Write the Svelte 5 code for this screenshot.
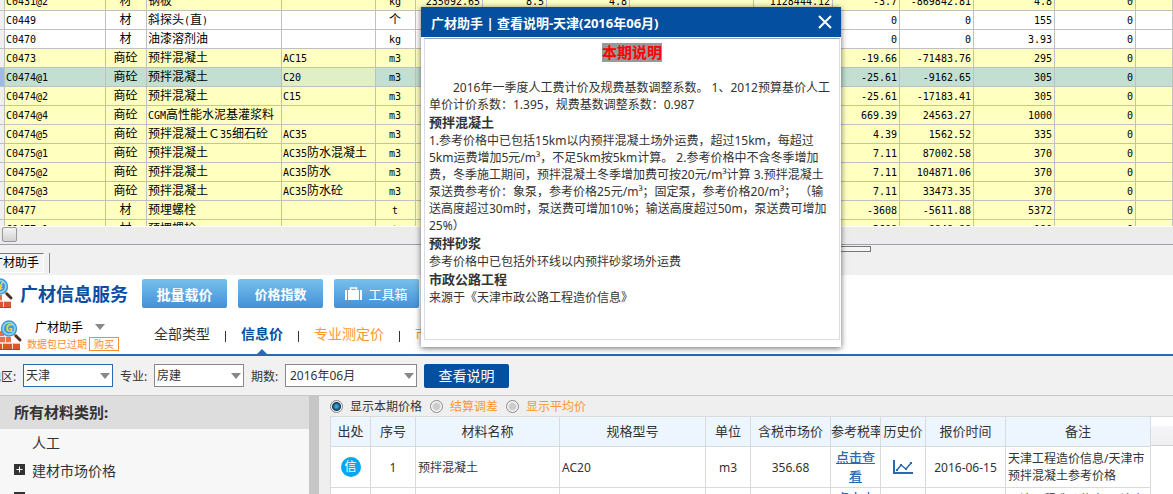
<script>
    let region = '天津';
    let major = '房建';
    let period = '2016年06月';
    let priceMode = 'current';
    let showNotice = true;

    const cols = [5, 101, 41, 135, 94, 40, 67, 64, 83, 124, 79, 67, 74, 81, 81];

    const rows = [
        ['C0431@2', '材', '钢板', '', 'kg', '235092.65', '8.5', '4.8', '', '1128444.12', '-3.7', '-869842.81', '4.8', '0'],
        ['C0449', '材', '斜探头(直)', '', '个', '', '', '', '', '', '0', '0', '155', '0'],
        ['C0470', '材', '油漆溶剂油', '', 'kg', '', '', '', '', '', '0', '0', '3.93', '0'],
        ['C0473', '商砼', '预拌混凝土', 'AC15', 'm3', '', '', '', '', '', '-19.66', '-71483.76', '295', '0'],
        ['C0474@1', '商砼', '预拌混凝土', 'C20', 'm3', '', '', '', '', '', '-25.61', '-9162.65', '305', '0'],
        ['C0474@2', '商砼', '预拌混凝土', 'C15', 'm3', '', '', '', '', '', '-25.61', '-17183.41', '305', '0'],
        ['C0474@4', '商砼', 'CGM高性能水泥基灌浆料', '', 'm3', '', '', '', '', '', '669.39', '24563.27', '1000', '0'],
        ['C0474@5', '商砼', '预拌混凝土Ｃ35细石砼', 'AC35', 'm3', '', '', '', '', '', '4.39', '1562.52', '335', '0'],
        ['C0475@1', '商砼', '预拌混凝土', 'AC35防水混凝土', 'm3', '', '', '', '', '', '7.11', '87002.58', '370', '0'],
        ['C0475@2', '商砼', '预拌混凝土', 'AC35防水', 'm3', '', '', '', '', '', '7.11', '104871.06', '370', '0'],
        ['C0475@3', '商砼', '预拌混凝土', 'AC35防水砼', 'm3', '', '', '', '', '', '7.11', '33473.35', '370', '0'],
        ['C0477', '材', '预埋螺栓', '', 't', '', '', '', '', '', '-3608', '-5611.88', '5372', '0'],
        ['C0477@1', '材', '预埋螺栓', '', 't', '', '', '', '', '', '-3608', '-8848.88', '180', '0'],
    ];
    let selected = 4;

    // latin runs and chinese runs get their own font size
    const runs = (text) => text.match(/[\x20-\x7e]+|[^\x20-\x7e]+/g) || [];
    const isLatin = (text) => /^[\x20-\x7e]/.test(text);

    const priceCols = [40, 45, 144, 146, 45, 80, 50, 45, 80, 145];
    const priceHeads = ['出处', '序号', '材料名称', '规格型号', '单位', '含税市场价', '参考税率', '历史价', '报价时间', '备注'];
</script>

{#snippet mascot(sign)}
    <svg class="mascot" width="24" height="32" viewBox="0 0 24 32" aria-hidden="true">
        <path d="M0 11h5v5H0zM0 17h12v5.500H0z" fill="#e8704a" />
        <path d="M0 23.500h21v6H0z" fill="#dc5430" />
        <path d="M0 16.500h9M0 23h21M6.500 17v6M3.500 23v7M13.500 23v7" stroke="#f9e0d4" fill="none" />
        <path d="M0 29.500h21" stroke="#b8401f" />
        <path d="M15 14l2 2" stroke="#f3a63a" stroke-width="3" />
        <path d="M17 16l4 4" stroke="#4a3024" stroke-width="3" stroke-linecap="round" />
        <circle cx="10" cy="8.500" r="7.500" fill="#8fd3f4" stroke="#3f9bd6" stroke-width="1.500" />
        <circle cx="10" cy="8.500" r="5" fill="#3a9bdc" />
        <text x="10" y="12" text-anchor="middle" font-size="10" font-weight="bold" fill="#f8cf3a">{sign}</text>
    </svg>
{/snippet}

{#snippet arrow()}
    <svg class="arrow" width="10" height="6" viewBox="0 0 10 6" aria-hidden="true"><path d="M0 0h10L5 6z" fill="#888" /></svg>
{/snippet}

<div class="app">
    <div class="grid">
        <table>
            <colgroup>
                {#each cols as w}<col style="width: {w}px" />{/each}
                <col />
            </colgroup>
            <tbody>
                {#each rows as row, i}
                <tr class:plain={i === 1 || i === 2} class:selected={i === selected} on:click={() => selected = i}>
                    <td class="gutter"></td>
                    {#each row as cell, c}
                    <td class:center={c === 1 || c === 4} class:num={c > 4} class:spec={c === 3}>{#each runs(cell) as run}<span class:latin={isLatin(run)}>{run}</span>{/each}</td>
                    {/each}
                    <td></td>
                </tr>
                {/each}
            </tbody>
        </table>
    </div>
    <div class="scrollbar"><div class="thumb"></div></div>
    <div class="dock">
        <button class="dockTab">广材助手</button>
        <div class="dockLine"></div>
        <div class="handle"></div>
    </div>

    <header>
        <div class="brand">
            {@render mascot('¥')}
            <h1>广材信息服务</h1>
            <button class="blue big">批量载价</button>
            <button class="blue">价格指数</button>
            <button class="blue light">
                <svg width="17" height="14" viewBox="0 0 17 14" aria-hidden="true">
                    <path d="M0 3h2v10H0zM3 3h11v10H3zM15 3h2v10h-2z" fill="#fff" />
                    <path d="M5.500 3V1h6v2" fill="none" stroke="#fff" stroke-width="1.500" />
                </svg>
                工具箱
            </button>
        </div>
        <div class="menu">
            {@render mascot('G')}
            <div class="user">
                <div class="name">广材助手 {@render arrow()}</div>
                <div class="expired">数据包已过期 <a href="#buy">购买</a></div>
            </div>
            <nav>
                <a href="#all">全部类型</a>
                <a href="#info" class="active">信息价</a>
                <a href="#pro" class="orange">专业测定价</a>
                <a href="#market" class="orange">市场价</a>
            </nav>
        </div>
    </header>

    <div class="filters">
        <label for="region">地区:</label>
        <div class="select focused">
            <select id="region" bind:value={region}><option>天津</option></select>
            {@render arrow()}
        </div>
        <label for="major">专业:</label>
        <div class="select">
            <select id="major" bind:value={major}><option>房建</option></select>
            {@render arrow()}
        </div>
        <label for="period">期数:</label>
        <div class="select wide">
            <select id="period" bind:value={period}><option>2016年06月</option></select>
            {@render arrow()}
        </div>
        <button class="view" on:click={() => showNotice = true}>查看说明</button>
    </div>

    <div class="body">
        <aside>
            <h2>所有材料类别:</h2>
            <ul>
                <li>人工</li>
                {#each ['建材市场价格', ''] as item}
                <li>
                    <svg width="11" height="11" viewBox="0 0 11 11" aria-hidden="true">
                        <path d="M0 0h11v11H0z" fill="#333" />
                        <path d="M5.500 2.500v6M2.500 5.500h6" stroke="#fff" />
                    </svg>
                    {item}
                </li>
                {/each}
            </ul>
        </aside>
        <div class="splitter"></div>
        <section>
            <div class="modes">
                <label><input type="radio" bind:group={priceMode} value="current" />显示本期价格</label>
                <label class="orange"><input type="radio" bind:group={priceMode} value="diff" />结算调差</label>
                <label class="orange"><input type="radio" bind:group={priceMode} value="average" />显示平均价</label>
            </div>
            <div class="priceArea">
                <table class="prices">
                    <colgroup>
                        {#each priceCols as w}<col style="width: {w}px" />{/each}
                    </colgroup>
                    <thead>
                        <tr>{#each priceHeads as head}<th>{head}</th>{/each}</tr>
                    </thead>
                    <tbody>
                        {#each ['1', '2'] as no}
                        <tr>
                            <td><span class="badge">信</span></td>
                            <td>{no}</td>
                            <td class="left">预拌混凝土</td>
                            <td class="left">AC20</td>
                            <td>m3</td>
                            <td>356.68</td>
                            <td><a href="#rate">点击查看</a></td>
                            <td>
                                <svg class="chart" width="20" height="15" viewBox="0 0 20 15" fill="none" stroke="#2a69b2" aria-hidden="true">
                                    <path d="M1 0v13h19" stroke-width="2" />
                                    <path d="M4 10l4-5 5 4 5-6" stroke-width="1.500" />
                                    <path d="M3 9h2v2H3zM7 4h2v2H7zM12 8h2v2h-2zM17 2h2v2h-2z" fill="#2a69b2" stroke="none" />
                                </svg>
                            </td>
                            <td>2016-06-15</td>
                            <td class="left">天津工程造价信息/天津市预拌混凝土参考价格</td>
                        </tr>
                        {/each}
                    </tbody>
                </table>
                <div class="rest"><div class="restHead"></div></div>
            </div>
        </section>
    </div>

    {#if showNotice}
    <div class="notice" role="dialog" aria-label="查看说明">
        <div class="noticeBar">
            <strong>广材助手 | 查看说明-天津(2016年06月)</strong>
            <button aria-label="关闭" on:click={() => showNotice = false}>
                <svg width="14" height="14" viewBox="0 0 14 14"><path d="M1 1l12 12M13 1L1 13" stroke="#fff" stroke-width="2" /></svg>
            </button>
        </div>
        <div class="noticeText">
            <h3><mark>本期说明</mark></h3>
            <p class="indent">2016年一季度人工费计价及规费基数调整系数。 1、2012预算基价人工<br />单价计价系数：1.395，规费基数调整系数：0.987</p>
            <h4>预拌混凝土</h4>
            <p>1.参考价格中已包括15km以内预拌混凝土场外运费，超过15km，每超过<br />5km运费增加5元/m³，不足5km按5km计算。 2.参考价格中不含冬季增加<br />费，冬季施工期间，预拌混凝土冬季增加费可按20元/m³计算 3.预拌混凝土<br />泵送费参考价：象泵，参考价格25元/m³；固定泵，参考价格20/m³；&nbsp;（输<br />送高度超过30m时，泵送费可增加10%；输送高度超过50m，泵送费可增加<br />25%）</p>
            <h4>预拌砂浆</h4>
            <p>参考价格中已包括外环线以内预拌砂浆场外运费</p>
            <h4>市政公路工程</h4>
            <p>来源于《天津市政公路工程造价信息》</p>
        </div>
    </div>
    {/if}
</div>

<style>
    :global(body) {
        background: #f0f0f0;
    }
    .app {
        position: relative;
        display: flex;
        flex-direction: column;
        height: 100vh;
        overflow: hidden;
        font-family: "Noto Sans", "Noto Sans CJK SC", sans-serif;
        font-size: 12px;
        color: #333;
    }
    button, select {
        font-family: inherit;
        padding: 0;
        margin: 0;
    }
    h1, h2, h3, h4, p, ul {
        margin: 0;
        padding: 0;
    }
    a {
        text-decoration: none;
    }
    .orange {
        color: #ff962d;
    }

    .grid {
        flex: none;
        height: 226px;
        overflow: hidden;
        border-bottom: 1px solid #fff;
    }
    .grid table {
        width: 100%;
        margin-top: -8px;
        table-layout: fixed;
        border-collapse: separate;
        border-spacing: 0;
        color: #000;
    }
    .grid td {
        box-sizing: border-box;
        height: 19px;
        padding: 0 2px 0 1px;
        line-height: 16px;
        white-space: nowrap;
        background: #ffffc0;
        border-right: 1px solid #c0c0c0;
        border-bottom: 1px solid #c0c0c0;
    }
    .grid .plain td {
        background: #fff;
    }
    .grid .selected td {
        background: #c2dfd1;
    }
    .grid .selected .spec {
        background: #e0efc8;
    }
    .grid .gutter, .grid .plain .gutter {
        background: #f0f0f0;
    }
    .grid .selected .gutter {
        background: #9bbce3;
    }
    .grid .center {
        text-align: center;
    }
    .grid .num {
        text-align: right;
    }
    .latin {
        font-family: "DejaVu Sans Mono", monospace;
        font-size: 10px;
        line-height: 12px;
    }

    .scrollbar {
        flex: none;
        height: 18px;
        background: #ececec;
        border-bottom: 1px solid #a0a0a8;
        box-sizing: border-box;
    }
    .thumb {
        box-sizing: border-box;
        width: 15px;
        height: 15px;
        margin-left: 2px;
        border: 1px solid #989898;
        border-radius: 2px;
        background: linear-gradient(#f4f4f4, #d2d2d4);
    }
    .dock {
        display: flex;
        flex: none;
        height: 30px;
        position: relative;
    }
    .dockTab {
        height: 20px;
        margin: 8px 5px 0 -14px;
        padding: 0 4px;
        font-size: 12px;
        line-height: 16px;
        color: #000;
        border: 1px solid #777;
        border-right-color: #fff;
        border-bottom-color: #fff;
        background: #f4f4f4;
    }
    .dockLine {
        width: 1px;
        height: 20px;
        margin-top: 8px;
        background: #888;
    }
    .handle {
        position: absolute;
        top: 1px;
        right: 302px;
        width: 280px;
        height: 4px;
        border: 1px solid #777;
        background: #f4f4f4;
    }

    header {
        flex: none;
        background: #fff;
        border-bottom: 2px solid #2a69b2;
    }
    .brand {
        display: flex;
        align-items: center;
        box-sizing: border-box;
        height: 42px;
        padding-bottom: 5px;
    }
    .mascot {
        flex: none;
    }
    .brand .mascot {
        margin-left: -10px;
    }
    h1 {
        width: 122px;
        margin-left: 6px;
        font-size: 18px;
        line-height: 24px;
        white-space: nowrap;
        color: #0c4da2;
    }
    .blue {
        display: flex;
        align-items: center;
        justify-content: center;
        gap: 6px;
        width: 85px;
        height: 29px;
        margin-right: 11px;
        font-size: 13px;
        font-weight: bold;
        color: #fff;
        border: 0;
        border-radius: 2px;
        background: linear-gradient(#76c0ed, #4390d8);
    }
    .big {
        font-size: 14px;
    }
    .light {
        font-weight: normal;
    }
    .menu {
        display: flex;
        height: 37px;
    }
    .menu .mascot {
        margin: 3px 0 0 -1px;
    }
    .user {
        width: 131px;
        padding: 2px 0 0 4px;
        box-sizing: border-box;
        white-space: nowrap;
    }
    .name {
        padding-left: 8px;
        line-height: 18px;
        color: #000;
    }
    .name .arrow {
        margin-left: 9px;
        vertical-align: 2px;
    }
    .expired {
        display: flex;
        gap: 2px;
        font-size: 10px;
        line-height: 14px;
        color: #ff8c2d;
    }
    .expired a {
        padding: 0 4px;
        line-height: 12px;
        color: #ff8c2d;
        border: 1px solid #ff8c2d;
    }
    nav {
        display: flex;
        font-size: 14px;
        line-height: 34px;
        white-space: nowrap;
    }
    nav a {
        position: relative;
        color: #333;
    }
    nav a.orange {
        color: #ff962d;
    }
    nav a + a::before {
        content: "";
        display: inline-block;
        width: 1px;
        height: 11px;
        margin: 0 15px;
        vertical-align: -3px;
        background: #333;
    }
    nav .active {
        font-weight: bold;
        color: #044f9f;
    }
    nav .active::after {
        content: "";
        position: absolute;
        bottom: 0;
        right: 16px;
        border: 5px solid transparent;
        border-top: 0;
        border-bottom-color: #2a69b2;
    }

    .filters {
        display: flex;
        align-items: center;
        flex: none;
        gap: 7px;
        height: 39px;
        padding-left: 23px;
        background: #f1f1f1;
        border-bottom: 1px solid #c8c8c8;
        white-space: nowrap;
    }
    .filters label:first-child {
        margin-left: -34px;
    }
    .filters label {
        box-sizing: border-box;
        width: 27px;
    }
    .select {
        position: relative;
        width: 90px;
    }
    .wide {
        width: 132px;
    }
    .select select {
        appearance: none;
        display: block;
        box-sizing: border-box;
        width: 100%;
        height: 23px;
        padding-left: 2px;
        font-size: 12px;
        color: #333;
        border: 1px solid #888;
        border-radius: 0;
        background: #fff;
    }
    .wide select {
        padding-left: 4px;
    }
    .focused select {
        border-color: #2a69b2;
    }
    .select .arrow {
        position: absolute;
        top: 9px;
        right: 3px;
        pointer-events: none;
    }
    .view {
        width: 85px;
        height: 24px;
        font-size: 14px;
        line-height: 24px;
        color: #fff;
        border: 0;
        border-radius: 2px;
        background: #044f9f;
    }

    .body {
        display: flex;
        flex: 1;
        min-height: 0;
        overflow: hidden;
    }
    aside {
        flex: none;
        width: 309px;
        background: #f7f7f7;
    }
    h2 {
        padding-left: 14px;
        font-size: 15px;
        line-height: 33px;
        background: #ddd;
    }
    ul {
        list-style: none;
        font-size: 14px;
        line-height: 28px;
    }
    li {
        display: flex;
        gap: 7px;
        height: 28px;
        padding-left: 14px;
    }
    li svg {
        margin-top: 7px;
    }
    li:first-child {
        padding-left: 32px;
    }
    .splitter {
        flex: none;
        width: 10px;
        background: #c6c6c6;
    }
    section {
        flex: 1;
        min-width: 0;
        padding-left: 11px;
        background: #efefef;
    }
    .modes {
        display: flex;
        gap: 8px;
        height: 20px;
    }
    .modes label {
        display: flex;
        align-items: center;
        gap: 7px;
    }
    .modes input {
        appearance: none;
        box-sizing: border-box;
        width: 13px;
        height: 13px;
        margin: 0;
        border: 1px solid #888;
        border-radius: 50%;
        background: radial-gradient(#ccc 0 3px, #f8f8f8 5px);
    }
    .modes input:checked {
        background: radial-gradient(#3aa8d8 0 1px, #12395c 4px, #f4f4f4 5px);
    }
    .priceArea {
        display: flex;
    }
    .prices {
        flex: none;
        width: 820px;
        table-layout: fixed;
        border-collapse: collapse;
        background: #fff;
    }
    .prices th, .prices td {
        padding: 0;
        border: 1px solid #d8dadb;
        text-align: center;
        line-height: 17px;
    }
    .prices th {
        height: 29px;
        font-size: 13px;
        font-weight: normal;
        white-space: nowrap;
        overflow: hidden;
        background: #edf5ff;
    }
    .prices td {
        height: 40px;
    }
    .prices .left {
        padding-left: 2px;
        text-align: left;
    }
    .prices a {
        display: block;
        padding: 0 5px;
        font-size: 13px;
        font-weight: 500;
        line-height: 19px;
        color: #2a69b2;
        text-decoration: underline;
    }
    .badge {
        display: inline-block;
        width: 20px;
        height: 20px;
        line-height: 20px;
        color: #fff;
        border-radius: 50%;
        background: #05a5f0;
    }
    .chart {
        display: block;
        margin: auto;
    }
    .rest {
        flex: 1;
        background: #fff;
        border-top: 1px solid #d8dadb;
    }
    .restHead {
        height: 28px;
        background: linear-gradient(#fff 9px, #f6f6f8 9px, #efeff1);
        border-bottom: 1px solid #d0d0d0;
    }

    .notice {
        position: absolute;
        top: 7px;
        left: 421px;
        width: 420px;
        box-sizing: border-box;
        padding-bottom: 7px;
        background: #fff;
        box-shadow: 0 1px 6px rgba(0, 0, 0, 0.6);
    }
    .noticeBar {
        display: flex;
        justify-content: space-between;
        align-items: center;
        height: 30px;
        padding: 0 9px 0 10px;
        font-size: 13px;
        color: #fff;
        background: #044f9f;
    }
    .noticeBar button {
        height: 16px;
        border: 0;
        background: none;
    }
    .noticeBar svg {
        display: block;
    }
    .noticeText {
        height: 300px;
        margin: 1px 1px 0 3px;
        padding-left: 4px;
        border: 1px solid #d9dce6;
        border-top-color: #a0a0a8;
        white-space: nowrap;
    }
    h3 {
        height: 36px;
        padding: 4px 4px 0 0;
        font-size: 15px;
        line-height: 19px;
        text-align: center;
    }
    mark {
        display: inline-block;
        color: #f00;
        background: #999;
    }
    .noticeText p {
        line-height: 17px;
    }
    .indent {
        text-indent: 24px;
    }
    h4 {
        font-size: 13px;
        line-height: 19px;
    }
</style>
